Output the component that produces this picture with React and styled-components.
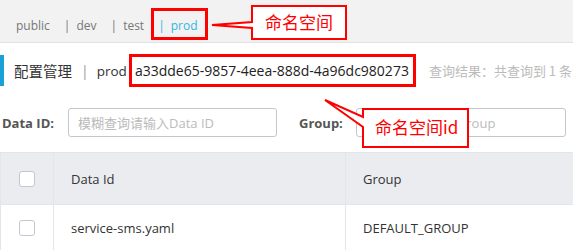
import React from 'react';
import styled, { createGlobalStyle } from 'styled-components';

const GlobalStyle = createGlobalStyle`
  body {
    margin: 0;
    background: #fff;
    font-family: 'Open Sans', 'Noto Sans CJK SC', sans-serif;
    color: #333;
    overflow: hidden;
  }
`;

const Page = styled.div`
  position: relative;
  width: 573px;
  height: 250px;
  overflow: hidden;
`;

const NavBar = styled.div`
  display: flex;
  align-items: center;
  height: 43px;
  padding: 10px 0 0 16px;
  box-sizing: border-box;
  background: #f2f2f2;
  border-bottom: 1px solid #e2e2e2;
  gap: 14px;
  font-size: 12px;
`;

const NavItem = styled.span`
  position: relative;
  line-height: 18px;
  color: ${(p) => (p.$active ? '#2fb6e3' : '#777')};

  ${(p) =>
    p.$marked &&
    `
    &::after {
      content: '';
      position: absolute;
      left: -7px;
      right: -10px;
      top: -9px;
      bottom: -5px;
      border: 3px solid #f00;
    }
  `}
`;

const Pipe = styled.span`
  margin-right: 6px;
`;

const TitleRow = styled.div`
  display: flex;
  align-items: center;
  height: 31px;
  margin-top: 12px;
  padding-left: 10px;
  border-left: 4px solid #1ba0d8;
  white-space: nowrap;
`;

const Title = styled.span`
  font-family: 'Noto Sans CJK SC', sans-serif;
  font-size: 14.5px;
  color: #333;
`;

const Divider = styled.span`
  margin: 0 8px 0 9px;
  color: #999;
  font-size: 14px;
`;

const Namespace = styled.span`
  font-size: 13.5px;
  color: #333;
`;

const NamespaceId = styled.span`
  margin-left: 2px;
  height: 27px;
  line-height: 27px;
  padding: 0 4px 0 3px;
  border: 3px solid #f00;
  font-size: 14px;
  color: #222;
`;

const ResultText = styled.span`
  margin-left: 13px;
  font-family: 'Noto Sans CJK SC', sans-serif;
  font-size: 13px;
  color: #bbb;
`;

const FilterRow = styled.div`
  display: flex;
  align-items: center;
  margin-top: 22px;
  padding-left: 2px;
  white-space: nowrap;
`;

const Label = styled.label`
  flex-shrink: 0;
  font-size: 13px;
  font-weight: 700;
  color: #555;
  margin-right: ${(p) => p.$gap}px;
`;

const Input = styled.input`
  flex-shrink: 0;
  box-sizing: border-box;
  width: ${(p) => p.$width}px;
  height: 29px;
  padding: 0 9px;
  border: 1px solid #c4c6cf;
  border-radius: 3px;
  font-family: 'Open Sans', 'Noto Sans CJK SC', sans-serif;
  font-size: 13px;
  margin-right: 22px;
  outline: none;

  &::placeholder {
    color: #bbb;
  }
`;

const Table = styled.div`
  margin-top: 15px;
  border: 1px solid #e4e5ea;
  border-right: none;
`;

const Row = styled.div`
  display: grid;
  grid-template-columns: 53px 292px 1fr;
  height: ${(p) => (p.$head ? 51 : 46)}px;
  background: ${(p) => (p.$head ? '#ebecf0' : '#fff')};
  border-bottom: 1px solid #e4e5ea;
`;

const Cell = styled.div`
  display: flex;
  align-items: center;
  justify-content: ${(p) => (p.$center ? 'center' : 'flex-start')};
  padding-left: ${(p) => (p.$center ? 0 : 17)}px;
  border-right: 1px solid #e4e5ea;
  font-size: 13px;
  color: #333;
  &:last-child {
    border-right: none;
  }
`;

const Checkbox = styled.span`
  display: block;
  width: 16px;
  height: 16px;
  box-sizing: border-box;
  border: 1px solid #c4c6cf;
  border-radius: 3px;
  background: #fff;
`;

const Annotations = styled.svg`
  position: absolute;
  left: 0;
  top: 0;
  pointer-events: none;
`;

const CalloutText = styled.text`
  font-family: 'Noto Sans CJK SC', sans-serif;
  font-size: 17px;
  fill: #f00;
`;

const callouts = [
  {
    d: 'M252,6 H346 V39 H252 V28 L212,25 L252,22 Z',
    x: 265,
    y: 29,
    label: '命名空间',
  },
  {
    d: 'M363,109 H468 V147 H363 V127 L325,100 L363,117 Z',
    x: 375,
    y: 134,
    label: '命名空间id',
  },
];

const tabs = [
  { name: 'public', first: true },
  { name: 'dev' },
  { name: 'test' },
  { name: 'prod', active: true },
];

const App = () => (
  <Page>
    <GlobalStyle />
    <NavBar>
      {tabs.map((t) => (
        <NavItem key={t.name} $active={t.active} $marked={t.active}>
          {!t.first && <Pipe>|</Pipe>}
          {t.name}
        </NavItem>
      ))}
    </NavBar>

    <TitleRow>
      <Title>配置管理</Title>
      <Divider>|</Divider>
      <Namespace>prod</Namespace>
      <NamespaceId>a33dde65-9857-4eea-888d-4a96dc980273</NamespaceId>
      <ResultText>查询结果：共查询到 1 条满足要求的配置。</ResultText>
    </TitleRow>

    <FilterRow>
      <Label $gap={14}>Data ID:</Label>
      <Input $width={209} placeholder='模糊查询请输入Data ID' />
      <Label $gap={13}>Group:</Label>
      <Input $width={210} placeholder='模糊查询请输入Group' />
    </FilterRow>

    <Table>
      <Row $head>
        <Cell $center>
          <Checkbox />
        </Cell>
        <Cell>Data Id</Cell>
        <Cell>Group</Cell>
      </Row>
      <Row>
        <Cell $center>
          <Checkbox />
        </Cell>
        <Cell>service-sms.yaml</Cell>
        <Cell>DEFAULT_GROUP</Cell>
      </Row>
    </Table>

    <Annotations width='573' height='250'>
      {callouts.map((c) => (
        <g key={c.label}>
          <path d={c.d} fill='#fff' stroke='#f00' strokeWidth='2' />
          <CalloutText x={c.x} y={c.y}>
            {c.label}
          </CalloutText>
        </g>
      ))}
    </Annotations>
  </Page>
);

export default App;
